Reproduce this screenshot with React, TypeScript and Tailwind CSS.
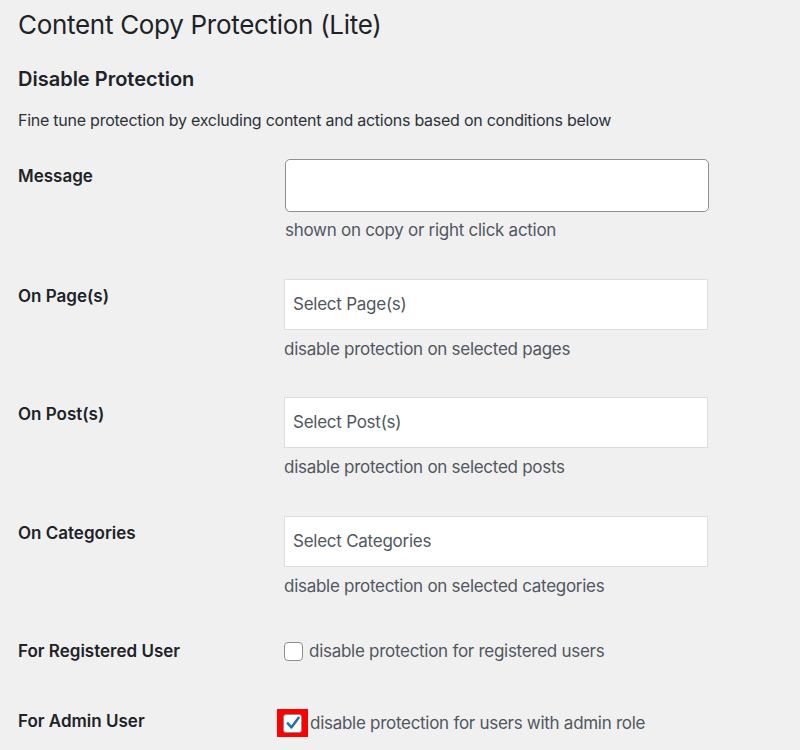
const font = { fontFamily: "Inter, 'Noto Sans', sans-serif" };

function SelectRow({ label, placeholder, help, pb }: { label: string; placeholder: string; help: string; pb: string }) {
	return (
		<div className={`flex ${pb}`}>
			<div className="w-[266px] pt-5 text-[17px] leading-6 font-semibold text-[#1d2327]">{label}</div>
			<div className="pt-[15px]">
				<div className="w-[424px] h-[51px] bg-white border border-[#dcdcde] flex items-center px-2 text-[17px] tracking-[-0.25px] text-[#50575e]">
					{placeholder}
				</div>
				<p className="mt-[7px] text-[17px] leading-6 tracking-[-0.28px] text-[#50575e]">{help}</p>
			</div>
		</div>
	);
}

export default function App() {
	return (
		<div style={font} className="min-h-[750px] w-[800px] bg-[#f0f0f1] pl-[18px] pt-[7px] text-[#1d2327]">
			<h1 className="text-[26px] leading-9 font-normal tracking-[-0.3px]">Content Copy Protection (Lite)</h1>
			<h2 className="mt-[22px] text-[20px] leading-7 font-semibold">Disable Protection</h2>
			<p className="mt-[15px] text-[16px] leading-6 tracking-[-0.25px] text-[#2c3338]">
				Fine tune protection by excluding content and actions based on conditions below
			</p>

			<div className="mt-3 flex pb-[22px]">
				<div className="w-[267px] pt-5 text-[17px] leading-6 font-semibold">Message</div>
				<div className="pt-[15px]">
					<div className="w-[424px] h-[53px] bg-white border border-[#8c8f94] rounded-[5px]" />
					<p className="mt-[6px] text-[17px] leading-6 tracking-[-0.28px] text-[#50575e]">shown on copy or right click action</p>
				</div>
			</div>

			<SelectRow label="On Page(s)" placeholder="Select Page(s)" help="disable protection on selected pages" pb="pb-[21px]" />
			<SelectRow label="On Post(s)" placeholder="Select Post(s)" help="disable protection on selected posts" pb="pb-[22px]" />
			<SelectRow label="On Categories" placeholder="Select Categories" help="disable protection on selected categories" pb="pb-[21px]" />

			<div className="flex pt-5 pb-[26px]">
				<div className="w-[266px] text-[17px] leading-6 font-semibold">For Registered User</div>
				<label className="flex items-center gap-[6px] text-[17px] leading-6 tracking-[-0.28px] text-[#50575e]">
					<span className="w-[19px] h-[19px] bg-white border border-[#8c8f94] rounded-[4px]" />
					disable protection for registered users
				</label>
			</div>

			<div className="flex pt-5">
				<div className="w-[259px] text-[17px] leading-6 font-semibold">For Admin User</div>
				<label className="flex items-center gap-[2px] text-[17px] leading-6 tracking-[-0.28px] text-[#50575e]">
					<span className="w-[31px] h-[28px] bg-[#ff0000] flex items-center justify-center">
						<span className="w-[19px] h-[19px] bg-white border border-[#8c8f94] rounded-[3px] flex items-center justify-center">
							<svg width="16" height="16" viewBox="0 0 20 20">
								<path d="M3.5 10.5 L8 15.5 L17 3.5" fill="none" stroke="#2271b1" strokeWidth="3.2" strokeLinecap="round" strokeLinejoin="round" />
							</svg>
						</span>
					</span>
					disable protection for users with admin role
				</label>
			</div>
		</div>
	);
}
